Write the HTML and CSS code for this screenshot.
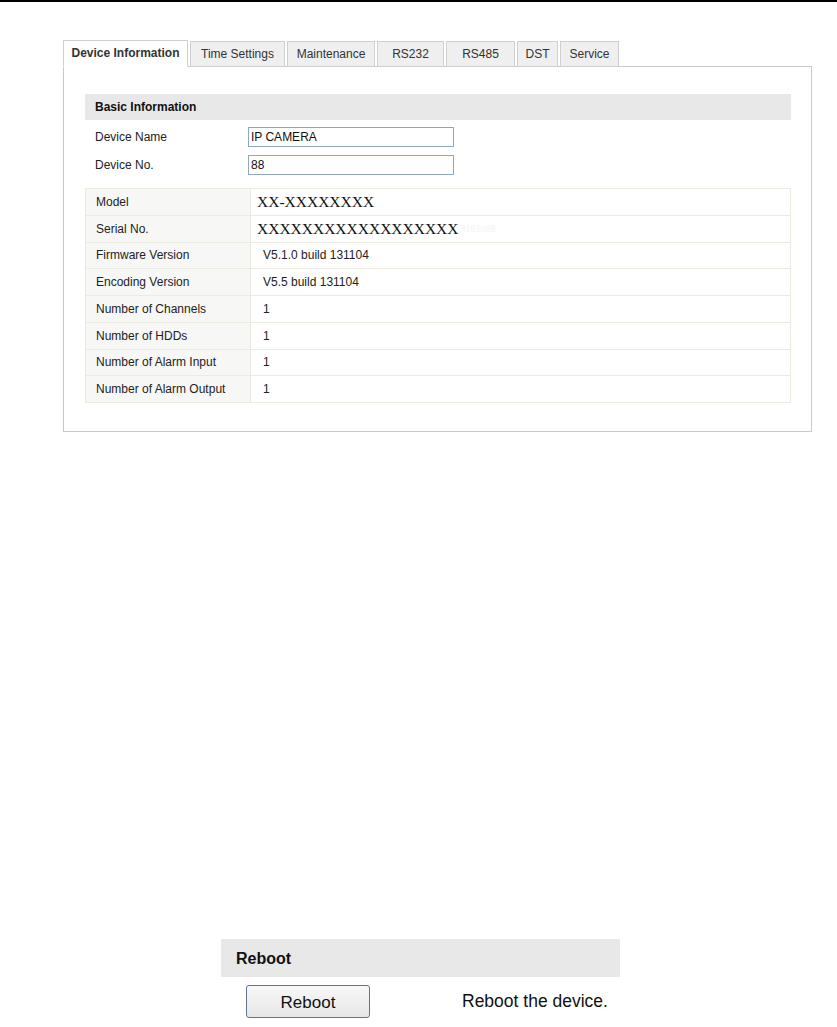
FILE: index.html
```html
<!DOCTYPE html>
<html>
<head>
<meta charset="utf-8">
<link rel="stylesheet" href="styles.css">
</head>
<body>
<div class="topbar"></div>
<div class="config">
  <div class="tabs">
    <div class="tab active t-info">Device Information</div>
    <div class="tab t-time">Time Settings</div>
    <div class="tab t-maint">Maintenance</div>
    <div class="tab t-rs232">RS232</div>
    <div class="tab t-rs485">RS485</div>
    <div class="tab t-dst">DST</div>
    <div class="tab t-service">Service</div>
  </div>
  <div class="panel">
    <div class="section-head">Basic Information</div>
    <div class="form">
      <div class="form-row">
        <span class="form-label">Device Name</span>
        <span class="input">IP CAMERA</span>
      </div>
      <div class="form-row">
        <span class="form-label">Device No.</span>
        <span class="input">88</span>
      </div>
    </div>
    <div class="info">
      <div class="info-row"><div class="k">Model</div><div class="v serif">XX-XXXXXXXX</div></div>
      <div class="info-row"><div class="k">Serial No.</div><div class="v serif">XXXXXXXXXXXXXXXXXX<span class="ghost">3161688</span></div></div>
      <div class="info-row"><div class="k">Firmware Version</div><div class="v">V5.1.0 build 131104</div></div>
      <div class="info-row"><div class="k">Encoding Version</div><div class="v">V5.5 build 131104</div></div>
      <div class="info-row"><div class="k">Number of Channels</div><div class="v">1</div></div>
      <div class="info-row"><div class="k">Number of HDDs</div><div class="v">1</div></div>
      <div class="info-row"><div class="k">Number of Alarm Input</div><div class="v">1</div></div>
      <div class="info-row"><div class="k">Number of Alarm Output</div><div class="v">1</div></div>
    </div>
  </div>
</div>
<div class="reboot">
  <div class="reboot-head">Reboot</div>
  <div class="reboot-row">
    <span class="btn">Reboot</span>
    <span class="reboot-desc">Reboot the device.</span>
  </div>
</div>
</body>
</html>
```
FILE: styles.css
```css
html, body {
  margin: 0;
  padding: 0;
  background: #ffffff;
}
body {
  font-family: "Liberation Sans", Arial, sans-serif;
  font-size: 12px;
  color: #222;
  width: 837px;
  height: 1027px;
  overflow: hidden;
}
.topbar {
  height: 2px;
  background: #000;
}
.config {
  margin: 38px 0 0 63px;
  width: 749px;
}
.tabs {
  display: flex;
  gap: 2px;
  align-items: flex-end;
  position: relative;
  z-index: 1;
  margin-bottom: -1px;
}
.tab {
  box-sizing: border-box;
  height: 26px;
  line-height: 25px;
  text-align: center;
  border: 1px solid #cfcfcf;
  background: #efefef;
  color: #333;
  white-space: nowrap;
}
.tab.active {
  background: #fff;
  font-weight: bold;
  height: 27px;
  border-bottom-color: #fff;
}
.t-info { width: 125px; }
.t-time { width: 95px; }
.t-maint { width: 88px; }
.t-rs232 { width: 67px; }
.t-rs485 { width: 69px; }
.t-dst { width: 41px; }
.t-service { width: 59px; }
.panel {
  border: 1px solid #c8c8c8;
  padding: 27px 20px 28px 21px;
}
.section-head {
  height: 26px;
  line-height: 26px;
  background: #e8e8e8;
  font-weight: bold;
  padding-left: 10px;
  color: #111;
}
.form {
  padding-top: 3px;
}
.form-row {
  display: flex;
  align-items: center;
  height: 28px;
}
.form-label {
  width: 153px;
  padding-left: 10px;
}
.input {
  box-sizing: border-box;
  width: 206px;
  height: 20px;
  line-height: 18px;
  border: 1px solid #8fa5c2;
  padding-left: 2px;
  color: #111;
}
.info {
  margin-top: 9px;
  border: 1px solid #ecebe2;
}
.info-row {
  display: flex;
  height: 25.75px;
  border-bottom: 1px solid #ecebe2;
}
.info-row:last-child {
  border-bottom: none;
}
.k {
  box-sizing: border-box;
  width: 165px;
  padding-left: 10px;
  display: flex;
  align-items: center;
  background: #f7f7f5;
  border-right: 1px solid #ecebe2;
}
.v {
  display: flex;
  align-items: center;
  padding-left: 12px;
}
.v.serif {
  font-family: "Liberation Serif", "Times New Roman", serif;
  font-size: 15.5px;
  padding-left: 6px;
  color: #111;
}
.ghost {
  color: #f3f3f3;
  font-size: 10px;
  margin-left: 2px;
}
.reboot {
  margin: 507px 0 0 221px;
  width: 399px;
}
.reboot-head {
  height: 38px;
  line-height: 40px;
  background: #e8e8e8;
  font-weight: bold;
  font-size: 16px;
  padding-left: 15px;
  color: #111;
}
.reboot-row {
  display: flex;
  align-items: center;
  margin-top: 8px;
  padding-left: 25px;
}
.btn {
  box-sizing: border-box;
  width: 124px;
  height: 33px;
  line-height: 33px;
  text-align: center;
  border: 1px solid #5f7590;
  border-radius: 3px;
  background: linear-gradient(#f8f8f8, #e6e6e6);
  font-size: 17px;
  color: #111;
}
.reboot-desc {
  margin-left: 92px;
  font-size: 17.5px;
  color: #111;
}
```
